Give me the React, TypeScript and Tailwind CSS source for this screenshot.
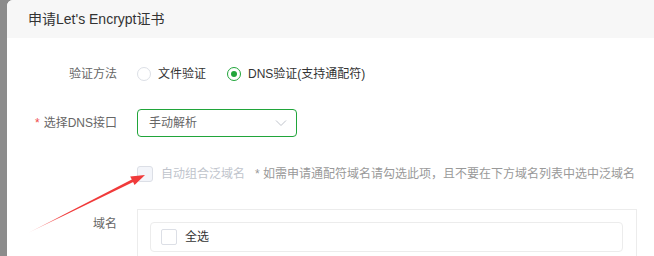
export default function App() {
  const font = { fontFamily: '"Liberation Sans", "Noto Sans CJK SC", sans-serif' };
  return (
    <div className="relative flex h-[256px] w-[654px] items-start overflow-hidden bg-[#8c8c8c]" style={font}>
      <div className="ml-[7px] h-full w-[660px] shrink-0 rounded-t-[6px] bg-white">
        <div className="flex h-[38px] items-center rounded-t-[6px] bg-[#f7f7f7] pl-[21px] text-[14px] text-[#333]">
          申请Let's Encrypt证书
        </div>

        <div className="mt-[22px] flex h-[28px] items-center text-[12px]">
          <div className="w-[110px] text-right text-[#666]">验证方法</div>
          <div className="ml-[20px] flex items-center">
            <span className="h-[14px] w-[14px] rounded-full border border-[#dcdfe6] bg-white" />
            <span className="ml-[7px] text-[#333]">文件验证</span>
            <span className="ml-[21px] flex h-[14px] w-[14px] items-center justify-center rounded-full border border-[#20a53a]">
              <span className="h-[6px] w-[6px] rounded-full bg-[#20a53a]" />
            </span>
            <span className="ml-[7px] text-[#333]">DNS验证(支持通配符)</span>
          </div>
        </div>

        <div className="mt-[21px] flex h-[28px] items-center text-[12px]">
          <div className="w-[110px] text-right text-[#666]">
            <span className="mr-[4px] text-[#f04b4b]">*</span>选择DNS接口
          </div>
          <div className="ml-[20px] flex h-[28px] w-[160px] items-center justify-between rounded-[4px] border border-[#20a53a] pl-[11px] pr-[9px] text-[#666]">
            <span>手动解析</span>
            <svg width="12" height="8" viewBox="0 0 12 8" fill="none">
              <polyline points="1,1.5 6,6.5 11,1.5" stroke="#c0c4cc" strokeWidth="1" />
            </svg>
          </div>
        </div>

        <div className="mt-[23px] flex h-[28px] items-center text-[12px]">
          <div className="ml-[130px] flex items-center">
            <span className="h-[16px] w-[16px] rounded-[3px] border border-[#dcdfe6] bg-[#f3f5fa]" />
            <span className="ml-[8px] text-[#c0c4cc]">自动组合泛域名</span>
            <span className="ml-[10px] text-[#999]">* 如需申请通配符域名请勾选此项，且不要在下方域名列表中选中泛域名</span>
          </div>
        </div>

        <div className="mt-[21px] flex text-[12px]">
          <div className="w-[110px] pt-[6px] text-right text-[#666]">域名</div>
          <div className="ml-[20px] h-[80px] w-[500px] border border-[#ececec] pl-[12px] pr-[13px] pt-[12px]">
            <div className="flex h-[30px] items-center rounded-[4px] border border-[#ececec] pl-[10px]">
              <span className="h-[16px] w-[16px] rounded-[2px] border border-[#dcdfe6] bg-white" />
              <span className="ml-[8px] text-[#333]">全选</span>
            </div>
          </div>
        </div>
      </div>

      <svg className="pointer-events-none absolute left-0 top-0" width="654" height="256" viewBox="0 0 654 256">
        <defs>
          <linearGradient id="arrowFade" x1="28" y1="233" x2="145" y2="175" gradientUnits="userSpaceOnUse">
            <stop offset="0" stopColor="#f04040" stopOpacity="0.2" />
            <stop offset="0.3" stopColor="#f03a3a" stopOpacity="1" />
            <stop offset="1" stopColor="#f03a3a" />
          </linearGradient>
        </defs>
        <polygon points="28,233 133.7,181.8 132.3,179.2" fill="url(#arrowFade)" />
        <polygon points="145,175 134.6,185 130.2,176.4" fill="#f03a3a" />
      </svg>
    </div>
  );
}
